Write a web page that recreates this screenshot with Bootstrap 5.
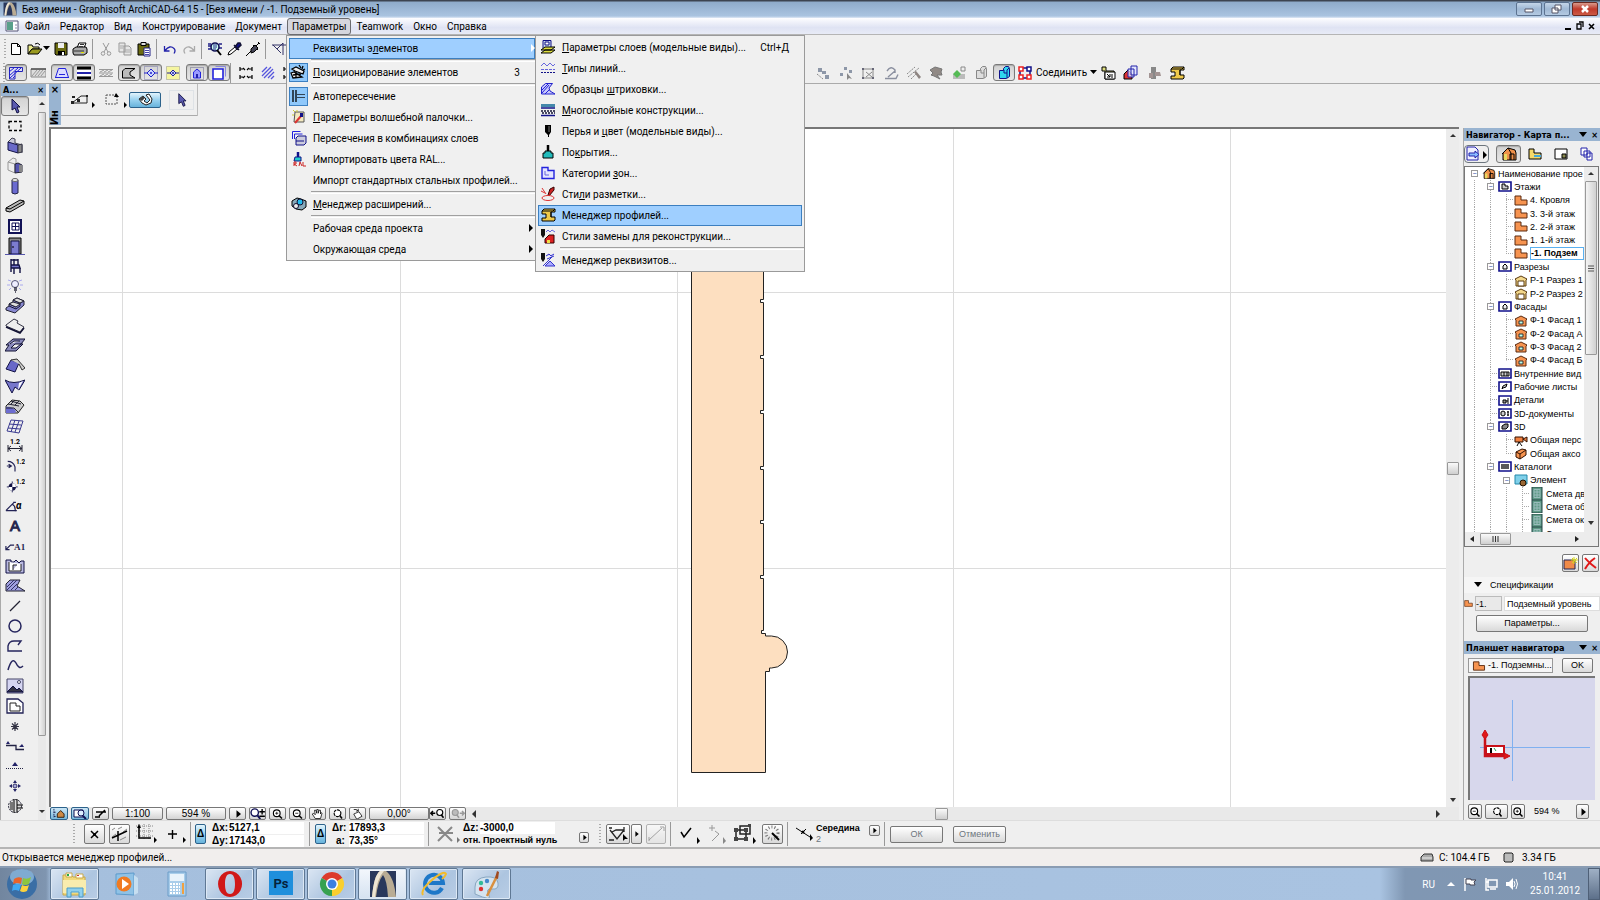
<!DOCTYPE html>
<html lang="ru">
<head>
<meta charset="utf-8">
<meta name="viewport" content="width=device-width, initial-scale=1">
<title>Graphisoft ArchiCAD-64 15</title>
<link rel="stylesheet" href="https://cdn.jsdelivr.net/npm/bootstrap@5.3.0/dist/css/bootstrap.min.css">
<style>
:root{--face:#efefef;--cap:#99b4d1;--ui:Roboto,"Open Sans",sans-serif;--small:"Liberation Sans",Arial,sans-serif}
body{font:10px/13px var(--ui);color:#000;background:var(--face);overflow:hidden}
button,input{font:inherit;color:inherit;padding:0;border:0;background:none;border-radius:0}
svg{display:block;flex:none}
.i16{width:16px;height:16px}.i20{width:20px;height:20px}.i28{width:28px;height:28px}
.titlebar{height:18px;background:linear-gradient(#3d4450 0,#3d4450 1px,#8fabca 2px,#a9c3e0 16px,#dfe8f5);padding-left:2px}
.winbtn{width:26px;height:14px;border:1px solid #5c7391;border-radius:2px;background:linear-gradient(#c4d5e8,#9fb8d4 50%,#b4cae2)}
.winbtn.close-w{background:linear-gradient(#d99a8c,#c0392b 50%,#cc5a45);border-color:#6b2a22}
.menubar{height:17px;background:linear-gradient(#fdfdff,#dfe3f3 60%,#e8ebf6);border-bottom:1px solid #b5b5b5;z-index:5;padding-left:4px}
.menubar .mb{height:17px;padding:0 4px;border:1px solid transparent;border-radius:3px;display:block;white-space:nowrap}
.menubar .mb.open{background:#d5d6dd;border-color:#6b6b6f}
.dropdown-menu.win{--bs-dropdown-min-width:0;margin:0;padding:2px 0 0;border:1px solid #9a9a9a;border-radius:0;background:#f0f0f0;font-size:10px;color:#000;top:17px;left:-1px;width:250px}
.dropdown-menu.win .dropdown-menu.win{top:-1px;left:248px;width:270px;padding:1px 0 0}
.mi{height:21px;width:100%;display:flex;align-items:center;padding:0 14px 0 1px;text-align:left;white-space:nowrap;border:1px solid transparent}
.mi .pic{width:23px;height:21px;display:flex;align-items:center;padding-left:2px;flex:none;margin-right:1px}
.mi.hot{background:#9fcfff;border-color:#3c7fc0;margin:0 2px;width:calc(100% - 4px);padding-left:0;padding-right:12px}
.mi.hot .pic{width:22px;padding-left:1px}
.main-m>li>.mi.hot{width:calc(100% - 2px);margin-right:0}
.mi .pic.on{background:#8fc8fb;border:1px solid #3c7fc0;width:19px;height:19px;padding:0;margin-right:5px}
.mi u{text-underline-offset:1px}
.msep{height:3px;margin-left:24px;border-top:1px solid #a0a0a0;border-bottom:1px solid #fff}
.arr{margin-left:auto;margin-right:-13px;border:4px solid transparent;border-left-color:#000;border-right:0}
.tbar{height:27px;padding-left:4px}
.tb{width:19px;height:20px;display:flex;align-items:center;justify-content:center;flex:none}
.tc{width:22px;height:17px;display:flex;align-items:center;justify-content:center;flex:none}
.pressed{border:1px solid #7a7a7a;border-radius:3px;background:linear-gradient(#d2d2d2,#e6e6e6);box-shadow:inset 0 1px 1px #aaa}
.grip{width:2px;height:20px;flex:none;background:repeating-linear-gradient(#aaa 0 1px,transparent 1px 3px)}
.vs{width:1px;height:20px;background:#999;margin:0 3px;flex:none}
.cap{background:var(--cap);height:12px;font:bold 9px/12px "DejaVu Sans Condensed","DejaVu Sans",sans-serif;padding:0 2px;white-space:nowrap;overflow:hidden;flex:none}
.toolbox{width:46px;border-left:1px solid #aaa}
.tool{height:20px;width:28px;display:flex;align-items:center;justify-content:center;flex:none}
.vbar{width:8px;background:#e9e9e9;flex:none}
.thumb{border:1px solid #999;border-radius:1px;background:linear-gradient(90deg,#f4f4f4,#d0d0d0)}
.thumb-h{border:1px solid #999;border-radius:1px;background:linear-gradient(#fafafa,#cfcfcf)}
.infobox{height:43px;padding-left:3px}
.infocap{width:12px;height:41px;background:var(--cap);font:bold 10px/12px "DejaVu Sans",sans-serif}
.infocap .vert{writing-mode:vertical-rl;transform:rotate(180deg)}
.infoin{width:136px;height:32px;border-bottom:1px solid #aaa}
.infoarea{border-right:1px solid #bbb;height:32px}
.blue{border:1px solid #2c628b;border-radius:2px;background:linear-gradient(#e3f4fc,#98d1ef 50%,#68b3db)}
.view{border-left:2px solid #777;border-top:2px solid #777;margin-left:3px;background:#fff}
.viewbar{height:13px;background:#e9e9e9;font:10px/12px var(--small);margin-left:4px;gap:3px}
.vb{height:13px;border:1px solid #777;border-radius:2px;background:linear-gradient(#fff,#d4d4d4);display:flex;align-items:center;justify-content:center;flex:none;overflow:hidden;width:17px;line-height:11px}
.vb.blue{background:linear-gradient(#cbe6f6,#78b8dc);border-color:#2c628b;width:18px}
.nav-pane{width:137px;flex:none;border-left:1px solid #aaa;font:9px/13px var(--small)}
.navtools{height:25px;padding-top:4px}
.nt{width:25px;height:18px;display:flex;align-items:center;justify-content:center}
.treebox{height:381px;border:1px solid #777;background:#fff;margin-right:1px}
.treelist{height:373px;flex:none}
.treewrap{height:365px;overflow:hidden}
.tr-row{flex:1 0 0;min-height:0;display:flex;align-items:center;white-space:nowrap;line-height:12px}
.tr-row svg{width:14px;height:13px;margin:0 2px 0 1px}
.g{width:16px;align-self:stretch;flex:none;background:repeating-linear-gradient(#aaa 0 1px,transparent 1px 2px) 9px 0/1px 100% no-repeat}
.g.n{background:none}
.g.t::after{content:"";display:block;height:50%;border-bottom:1px dotted #aaa;margin-left:9px}
.g.e{background-size:1px 50%}
.g.b{display:flex;align-items:center}
.g.b::before{content:"−";width:7px;height:7px;border:1px solid #999;background:#fff;margin-left:6px;font:7px/5px var(--small);color:#2040a0;text-align:center}
.cur{border:1px solid #5ab0f0;font-weight:bold;line-height:11px;flex:1}
.sb{width:14px;background:#ececec;flex:none;padding-bottom:2px}
.pbtn{border:1px solid #777;border-radius:2px;background:linear-gradient(#fff,#d9d9d9);display:flex;align-items:center;justify-content:center;flex:none}
.fld{background:#fff;border:1px solid #ddd;height:15px;min-width:0}
.sm{font:9px/13px var(--small)}
.preview{background:#d7d7ec;height:124px;border-left:2px solid #777;border-top:2px solid #777;margin:3px 5px 0 4px}
.coord{height:29px;border-top:1px solid #ddd;border-bottom:2px solid #b5b5b5;font:bold 10px/12px var(--small);padding-left:73px}
.cf{width:75px;height:12px;background:#fff;font-weight:bold}
.lb{width:17px;flex:none}
.cb{width:21px;height:20px}
.vs.tall{height:24px}
.statusb{height:17px;background:#f1eeed}
.taskbar{height:34px;background:linear-gradient(90deg,#72869f,#7f95b0 46px,#a5bfdd 52px,#a9c3e1 1380px,#8097b3 1405px,#8197b2);border-top:2px solid #8a9cb3;color:#fff}
.tk{width:49px;height:32px;margin-right:2px;display:flex;align-items:center;justify-content:center;flex:none}
.tk.run{border:1px solid #5f7894;border-radius:2px;background:linear-gradient(135deg,#dbe6f3,#adc5e0 60%,#b9cde5);box-shadow:inset 0 0 0 1px #dce8f5}
.tk.act{background:linear-gradient(#f3f7fc,#d5e2f1)}
</style>
</head>
<body class="d-flex flex-column vh-100">

<svg width="0" height="0" style="position:absolute" aria-hidden="true">
<defs>
<symbol id="doc" viewBox="0 0 16 16"><path d="M3.500 2.500h6l3 3v8h-9zM9.500 2.500v3h3" fill="#fff" stroke="#000"/></symbol>
<symbol id="open" viewBox="0 0 16 16"><path d="M1 13V4h4l1 2h6v2H5z" fill="#e9e98a" stroke="#000"/><path d="M1 13l4-5h10l-4 5z" fill="#9a9a20" stroke="#000"/><path d="M8 3q3-2 5 1" fill="none" stroke="#000"/></symbol>
<symbol id="save" viewBox="0 0 16 16"><path d="M2 2h12v12H3l-1-1z" fill="#6b6b10" stroke="#000"/><path d="M5 2h6v5H5z" fill="#eee"/><path d="M5 10h7v4H5z" fill="#000"/><path d="M9 11h2v3H9z" fill="#fff"/></symbol>
<symbol id="print" viewBox="0 0 16 16"><path d="M5 7l2-5h7l-2 5" fill="#fff" stroke="#000"/><path d="M1 8l3-2h10l1 2v4l-3 2H2l-1-2z" fill="#aaa" stroke="#000"/><path d="M2 10h10M8 3.500h4M7 5.500h4" stroke="#333"/><path d="M9 11h3v1H9z" fill="#e6e600"/></symbol>
<symbol id="cut" viewBox="0 0 16 16"><path d="M5 2l5 9M11 2L6 11" stroke="#999" fill="none"/><circle cx="5" cy="12.500" r="1.800" fill="none" stroke="#999"/><circle cx="11" cy="12.500" r="1.800" fill="none" stroke="#999"/></symbol>
<symbol id="copy" viewBox="0 0 16 16"><path d="M2 2h6v9H2zM7 5h5l2 2v7H7z" fill="#e6e6e6" stroke="#999"/><path d="M3 5h4M3 7h3M8 9h5M8 11h5" stroke="#aaa"/></symbol>
<symbol id="paste" viewBox="0 0 16 16"><path d="M2 3h11v11H2z" fill="#6b6b10" stroke="#000"/><path d="M5 1.500h5v3H5z" fill="#ddd" stroke="#000"/><path d="M8 7h6v8H8z" fill="#fff" stroke="#228"/><path d="M9 9.500h4M9 11.500h4M9 13.500h4" stroke="#44a"/></symbol>
<symbol id="undo" viewBox="0 0 16 16"><path d="M2.500 5v5h5M3 9.500q5-6 9-2q2 2 0 5" fill="none" stroke="#22a" stroke-width="1.300"/></symbol>
<symbol id="redo" viewBox="0 0 16 16"><path d="M13.500 5v5h-5M13 9.500q-5-6-9-2q-2 2 0 5" fill="none" stroke="#aaa" stroke-width="1.300"/></symbol>
<symbol id="find" viewBox="0 0 16 16"><path d="M1 3h3M1 5h3M1 8h3M12 3h3M12 7h3" stroke="#228" stroke-width="1.500"/><circle cx="8" cy="6" r="4" fill="#cfe" stroke="#115" stroke-width="1.600"/><path d="M6 4h4M6 6h4M6 8h3" stroke="#228"/><path d="M10 9l4 5" stroke="#000" stroke-width="2"/></symbol>
<symbol id="drop" viewBox="0 0 16 16"><path d="M2 14l1-3 6-5 2 2-6 5z" fill="#fff" stroke="#000"/><path d="M8 4l5 5M9 6l3-4 2 0 1 2-4 4z" stroke="#113" stroke-width="1.500" fill="#118"/></symbol>
<symbol id="syr" viewBox="0 0 16 16"><path d="M1 15l5-5M13 1l2 2M14 2l-3 3M8 4l5 5" stroke="#000" fill="none"/><path d="M6 8l4-4 3 3-4 4-3 1z" fill="#445" stroke="#000"/></symbol>
<symbol id="sieve" viewBox="0 0 16 16"><path d="M1 4h14M2 4l8 8M6 8l6-6v12" fill="none" stroke="#336"/></symbol>
<symbol id="hat" viewBox="0 0 16 16"><path d="M1.500 14V2.500h13v4H7V14z" fill="#dde" stroke="#22b"/><path d="M1 7l5-4M1 11l9-8M2 13l11-10M5 13l2-2" stroke="#22d"/></symbol>
<symbol id="slabg" viewBox="0 0 16 16"><path d="M1 4h15v8H1z" fill="#ddd" stroke="#888"/><path d="M1 4h15" stroke="#222"/><path d="M2 11l5-6M5 11l5-6M8 11l5-6M11 11l4-5" stroke="#999"/></symbol>
<symbol id="trap" viewBox="0 0 16 16"><path d="M4.500 3.500h7l3 9h-13z" fill="#dcdcff" stroke="#22d"/><path d="M1 12.500h14M5 9.500h6" stroke="#22d"/></symbol>
<symbol id="slabk" viewBox="0 0 16 16"><path d="M1 3h14M1 13h14" stroke="#000" stroke-width="3"/><path d="M1 7h14v2H1z" fill="#22a"/><path d="M1 5h14v2H1zM1 9h14v2H1z" fill="#fff"/></symbol>
<symbol id="slabl" viewBox="0 0 16 16"><path d="M1 4.500h14M1 11.500h14" stroke="#999"/><path d="M2 7l4-2M6 7l4-2M10 7l4-2M2 11l4-2M6 11l4-2M10 11l4-2M1 8h14" stroke="#999"/></symbol>
<symbol id="poly" viewBox="0 0 16 16"><path d="M4 3.500h10L9 7l0 3 5 3H1.500V6z" fill="#bbb" stroke="#000"/></symbol>
<symbol id="eye" viewBox="0 0 16 16"><path d="M1.500 1.500h13v13h-13z" fill="none" stroke="#77a" stroke-dasharray="1 1"/><path d="M8 4l4 4-4 4-4-4zM1 8h3M12 8h3" fill="#c9d4ff" stroke="#22c"/><circle cx="8" cy="8" r="1" fill="#22c"/></symbol>
<symbol id="eyey" viewBox="0 0 16 16"><path d="M1.500 1.500h13v13h-13z" fill="#f5f5a0" stroke="#998" stroke-dasharray="1 1"/><path d="M8 5l3 3-3 3-3-3zM2 8h3M11 8h3" fill="#c9d4ff" stroke="#229"/><circle cx="8" cy="8" r="1" fill="#229"/></symbol>
<symbol id="house" viewBox="0 0 16 16"><path d="M1.500 2.500h13v12h-13z" fill="none" stroke="#668" stroke-dasharray="1 1"/><path d="M4.500 13V7L8 4l3.500 3v6z" fill="#99f" stroke="#22d"/><path d="M7 9h2v4H7z" fill="#22a"/></symbol>
<symbol id="lay" viewBox="0 0 16 16"><path d="M4.500 1.500h10v10" fill="none" stroke="#88d"/><path d="M2 4h10v10H2z" fill="#fff" stroke="#22d" stroke-width="1.600"/></symbol>
<symbol id="stretch" viewBox="0 0 16 16"><path d="M2 2v4M14 2v4M2 10v4M14 10v4M2 4h3M11 4h3M2 12h3M11 12h3M5 3l2 2M11 3L9 5M5 13l2-2M11 13l-2-2" stroke="#000" stroke-width="1.200"/></symbol>
<symbol id="hb" viewBox="0 0 16 16"><path d="M2 7l5-5M2 11l9-9M4 13l9-9M8 13l6-6M11 14l3-3" stroke="#55d" stroke-width="1.300"/></symbol>
<symbol id="nd1" viewBox="0 0 16 16"><path d="M3 3h4v4H3zM7 6h4v3H7zM10 10h4v4h-4z" fill="#8d97a8"/><path d="M2 9l6 5" stroke="#888" stroke-dasharray="2 1"/></symbol>
<symbol id="nd2" viewBox="0 0 16 16"><path d="M6 2h3v3H6zM2 8h3v3H2zM11 5h3v3h-3z" fill="#8d97a8"/><path d="M9 8v7l2-2 3 1z" fill="#888"/></symbol>
<symbol id="nd3" viewBox="0 0 16 16"><path d="M3 4h10v9H3zM6 12l6-5M6 7l6 5" fill="none" stroke="#888"/><path d="M2 3h2v2H2zM12 3h2v2h-2zM2 12h2v2H2zM12 12h2v2h-2z" fill="#667"/></symbol>
<symbol id="nd4" viewBox="0 0 16 16"><path d="M2 13.500h11l2-4M4 6q4-6 8-1v3M5 12l7-6" fill="none" stroke="#8a8f9f" stroke-width="1.400"/></symbol>
<symbol id="nd5" viewBox="0 0 16 16"><path d="M1 9l8-7M2 12L13 3M5 14l5-5" stroke="#888" stroke-dasharray="2 1"/><path d="M8 7l2-1 5 6-2 2z" fill="#8e8582"/></symbol>
<symbol id="nd6" viewBox="0 0 16 16"><path d="M2 5l5-3 7 2-1 3 1 3-5 0 3 4-6-3-3-1 2-2z" fill="#918a86" stroke="#777"/></symbol>
<symbol id="nd7" viewBox="0 0 16 16"><path d="M2 9h12v5H2z" fill="#bbb"/><path d="M10 2h4v4h-4z" fill="none" stroke="#888"/><path d="M6 5l4 4-4 4-4-4z" fill="#5b5"/></symbol>
<symbol id="cube" viewBox="0 0 16 16"><path d="M3.500 5.500h4v-2l2-2h3l1 2v8l-3 2h-7z" fill="#ddd" stroke="#888"/><path d="M8 5v3h3M11 13V5l2-2" fill="none" stroke="#888"/></symbol>
<symbol id="cubec" viewBox="0 0 16 16"><path d="M3.500 5.500h4v-2l2-2h3l1 2v8l-3 2h-7z" fill="#2fd5ee" stroke="#118"/><path d="M8 5v3h3M11 13V5l2-2" fill="none" stroke="#118"/></symbol>
<symbol id="join" viewBox="0 0 16 16"><path d="M3 3h10v10H3z" fill="none" stroke="#118" stroke-width="1.500"/><path d="M2 2h4v4H2zM10 10h4v4h-4zM2 10h4v4H2z" fill="#fff" stroke="#e22" stroke-width="1.500"/><path d="M10 2h4v4h-4z" fill="#fff" stroke="#118" stroke-width="1.500"/></symbol>
<symbol id="prof" viewBox="0 0 16 16"><path d="M2 4l2-2h11v3h-4v5h4v3l-1 1H2v-3h4V7H2z" fill="#eec94a" stroke="#000"/><path d="M2 4h11l2-2M11 5v5" stroke="#000" fill="none"/></symbol>
<symbol id="obj1" viewBox="0 0 16 16"><path d="M2 2h4v4h8v8H5V6H2z" fill="#dfdf80" stroke="#000"/><path d="M5 7h10v7H5z" fill="#fff" stroke="#000"/><path d="M7 9l3 3M10 9v3H7M12 9v4" fill="none" stroke="#000"/></symbol>
<symbol id="obj2" viewBox="0 0 16 16"><path d="M1 14V9l4-4 4 4v5z" fill="#d33" stroke="#000"/><path d="M5 4h6v8H5zM8 1h6v9H8z" fill="#dfe2ff" fill-opacity=".8" stroke="#22a"/></symbol>
<symbol id="obj3" viewBox="0 0 16 16"><path d="M5 2h5v12H5z" fill="#888"/><path d="M3 8h4v5H3zM9 7h5l1 4H9z" fill="#a39493"/></symbol>
<symbol id="layers" viewBox="0 0 16 16"><path d="M3 1.500h8v8H3z" fill="#cde" stroke="#118"/><path d="M5 3h4v3H5z" fill="#fff" stroke="#118"/><path d="M1 11l4-3h10l-4 3zM1 14l4-3h10l-4 3z" fill="#dede40" stroke="#000"/></symbol>
<symbol id="lines" viewBox="0 0 16 16"><path d="M1 6l3-3 3 3 3-3 3 3 2-2" fill="none" stroke="#66d"/><path d="M1 9.500h14" stroke="#66d" stroke-dasharray="3 1"/><path d="M1 12.500h14" stroke="#118" stroke-dasharray="2 1"/></symbol>
<symbol id="fill" viewBox="0 0 16 16"><path d="M1.500 13V6l4-3.500h7L9 7l1 3 5 3z" fill="#c8c8fa" stroke="#22c"/><path d="M2 9l6-6M2 12l7-8M5 13l4-4" stroke="#22d"/></symbol>
<symbol id="comp" viewBox="0 0 16 16"><path d="M1 2h14v3H1z" fill="#48a"/><path d="M1 6h14M1 13.500h14" stroke="#118" stroke-width="1.500"/><path d="M1 9h14M2 11h13" stroke="#113" stroke-width="1.500" stroke-dasharray="2 1"/></symbol>
<symbol id="pen" viewBox="0 0 16 16"><path d="M5 2h6v7l-2 3v2H8v-2L5 9z" fill="#000"/><path d="M9 3v6" stroke="#777"/></symbol>
<symbol id="brush" viewBox="0 0 16 16"><path d="M8 1v7" stroke="#000" stroke-width="2.500"/><path d="M5 7h6v2h2v5H3V9h2z" fill="#2bb" stroke="#000"/></symbol>
<symbol id="zone" viewBox="0 0 16 16"><path d="M2 2.500h6v3h6v8H2z" fill="#e4e4ff" stroke="#22d" stroke-width="1.400"/><path d="M5 6v4h4" stroke="#66d" fill="none"/></symbol>
<symbol id="mark" viewBox="0 0 16 16"><path d="M8 9l2-6 4-2 0 3-5 6z" fill="#c22" stroke="#300"/><path d="M2 2l4 6M1 5l4 2" fill="none" stroke="#d33"/><ellipse cx="8" cy="12" rx="6" ry="2.500" fill="none" stroke="#d33"/></symbol>
<symbol id="reno" viewBox="0 0 16 16"><path d="M1 1h4v6l-2 3-2-3z" fill="#111"/><path d="M6 4l2-2 2 2 2-2 3 2" fill="none" stroke="#66d"/><path d="M5 15v-4l4-4 5 0v8z" fill="#d22" stroke="#300"/><path d="M7 12h3v3H7z" fill="#ed4"/></symbol>
<symbol id="attr" viewBox="0 0 16 16"><path d="M1 1h4v6l-2 3-2-3z" fill="#111"/><path d="M6 4l3-2 2 2 3-2M7 7l7-3M3 14l9-9M5 14h10l-5-5z" fill="#aaf" stroke="#33c"/></symbol>
<symbol id="posn" viewBox="0 0 16 16"><path d="M2 5l4-2 8 4-1 3-8-3zM1 9l3-1 8 5-9 1z" fill="#eee" stroke="#000" stroke-width="1.300"/><path d="M9 1l2 3M13 2l-1 3M15 5l-2 1M3 11l8-1M6 8v5" stroke="#000" stroke-width="1.300"/></symbol>
<symbol id="auto" viewBox="0 0 16 16"><path d="M3 2v12M6 2v12" stroke="#000" stroke-width="1.300"/><path d="M7 6.500h8M7 9.500h8" stroke="#345"/></symbol>
<symbol id="wand" viewBox="0 0 16 16"><path d="M4 3h9v10H3z" fill="#f3e9c0" stroke="#555"/><path d="M4 14l6-7" stroke="#d33" stroke-width="2"/><path d="M9 4h3v4H9z" fill="#118"/><path d="M2 1l2 2M1 6h2M6 1v2" stroke="#cc3"/></symbol>
<symbol id="inter" viewBox="0 0 16 16"><path d="M1.500 9V1.500h8M3.500 9V4h8" fill="none" stroke="#22d"/><path d="M5 8l2-2h8v7l-2 2H5z" fill="#ccd" stroke="#118"/><path d="M5 11h8" stroke="#118"/></symbol>
<symbol id="ral" viewBox="0 0 16 16"><path d="M7 1v5" stroke="#118" stroke-width="2.500"/><path d="M4 6h6v4H3z" fill="#2cc" stroke="#118"/><path d="M3 15v-4h2v2H3l3 2M8 15l1-4 2 4M12 11v4h3" stroke="#c22" fill="none"/></symbol>
<symbol id="ext" viewBox="0 0 16 16"><path d="M1 5l5-3 4 1 5 2v6l-4 3-6-1-4-3z" fill="#8ab" stroke="#000"/><circle cx="9" cy="6" r="3" fill="#2be" stroke="#113"/><circle cx="5" cy="10" r="2.500" fill="#eee" stroke="#113"/></symbol>
<symbol id="cursor" viewBox="0 0 20 20"><path d="M7 3v11l3-2 2 5 2-1-2-5h3z" fill="#5b5bb0" stroke="#114"/></symbol>
<symbol id="marq" viewBox="0 0 20 20"><path d="M4 5.500h12v9H4z" fill="none" stroke="#000" stroke-width="1.300" stroke-dasharray="3 2"/></symbol>
<symbol id="wall" viewBox="0 0 20 20"><path d="M3 6l4-4 3 1v4l7 2v8" fill="#c8c8d8" stroke="#445"/><path d="M3 6l10 3v8L3 14z" fill="#6a6ac8" stroke="#114"/><path d="M13 9l4-1v8l-4 1z" fill="#888" stroke="#334"/></symbol>
<symbol id="wall2" viewBox="0 0 20 20"><path d="M3 6l7 2v9l-7-3zM3 6l5-4 3 1v4" fill="#eee" stroke="#999"/><path d="M10 8l3-1 4 2v7l-7 1z" fill="#5555b0" stroke="#223"/><path d="M14 9l3 0v7l-3 0z" fill="#888"/></symbol>
<symbol id="colm" viewBox="0 0 20 20"><path d="M7 4v13q3 2 6 0V4z" fill="#6a6ad0" stroke="#224"/><ellipse cx="10" cy="4" rx="3" ry="1.500" fill="#eee" stroke="#666"/></symbol>
<symbol id="beam" viewBox="0 0 20 20"><path d="M1 12L15 4l4 1v3L5 16l-4-1z" fill="#bbb" stroke="#000"/><path d="M1 12l4 1L19 5" fill="none" stroke="#000"/></symbol>
<symbol id="wind" viewBox="0 0 20 20"><path d="M4 4h12v13H4z" fill="#fff" stroke="#115" stroke-width="2"/><path d="M7 7h7v7H7zM10.500 7v7M7 10.500h7" fill="none" stroke="#115"/></symbol>
<symbol id="door" viewBox="0 0 20 20"><path d="M4 2h12v16H4z" fill="#888" stroke="#000"/><path d="M6 5h8v13H6z" fill="#7c7cd0" stroke="#114"/><path d="M0 18.500h20" stroke="#55a"/><path d="M7 11h2" stroke="#000"/></symbol>
<symbol id="chair" viewBox="0 0 20 20"><path d="M6 3v13M9 3v6M13 3v6M6 4h7M6 9l8 0 1 3H6z" fill="#77c" stroke="#114" stroke-width="1.400"/><path d="M9 12v6M15 12v5" stroke="#114" stroke-width="1.400"/></symbol>
<symbol id="lamp" viewBox="0 0 20 20"><circle cx="10" cy="8" r="3.500" fill="#eef" stroke="#557"/><path d="M9 12h3M9 14h3M10 16h1" stroke="#334" stroke-width="1.500"/><path d="M3 4l3 1M2 9h3M17 4l-3 1M15 9h3M4 14l2-2M16 14l-2-2" stroke="#aae"/></symbol>
<symbol id="stair" viewBox="0 0 20 20"><path d="M1 12l3-2V8l4-2V4l4-2 7 3v4L10 17 1 14z" fill="#8888d0" stroke="#223"/><path d="M4 8l7 3M8 4l7 3M4 10l7 3 4-3V7l4-2" fill="none" stroke="#113"/><path d="M4 8l4-2 7 2-4 3zM8 4l4-2 7 3-4 2z" fill="#ddd" stroke="#223"/></symbol>
<symbol id="slab" viewBox="0 0 20 20"><path d="M1 9l8-6 4 2-1 2 7 4-4 5-14-6z" fill="#eee" stroke="#334"/><path d="M1 11l14 6 4-5" fill="none" stroke="#113" stroke-width="1.500"/></symbol>
<symbol id="mesh" viewBox="0 0 20 20"><path d="M0 15l4-6H1l7-6h12l-4 5h2l-7 7z" fill="#88b" stroke="#113"/><path d="M6 12l4-4h6l-5 4zM5 8l4-3h6" fill="#eee" stroke="#113"/></symbol>
<symbol id="roof" viewBox="0 0 20 20"><path d="M6 4l8 3-4 9-9-3z" fill="#6868c8" stroke="#114"/><path d="M6 4l6-1 8 9-3 2-3-6" fill="#ccc" stroke="#333"/></symbol>
<symbol id="shell" viewBox="0 0 20 20"><path d="M0 4q8 5 20 0l-6 10-4-3-3 6z" fill="#7777cc" stroke="#114"/><path d="M14 7l4-2-5 9z" fill="#fff"/></symbol>
<symbol id="terr" viewBox="0 0 20 20"><path d="M1 10l6-6 8 1 4 4-6 8H1z" fill="#ccc" stroke="#222"/><path d="M1 11q6-1 10 4l-1 2H1z" fill="#6c6cd0"/><path d="M3 8l11 2M6 5l10 3M6 8l4-4M10 9l4-4M1 12h8l4 4" stroke="#223" fill="none"/></symbol>
<symbol id="curt" viewBox="0 0 20 20"><path d="M6 4l12 1-4 12-12-2zM4 8l12 1M3 12l12 1M10 4L6 16M14 5l-4 11" fill="none" stroke="#3a3a90"/></symbol>
<symbol id="dim" viewBox="0 0 20 20"><path d="M3 9v7M17 9v7M3 12.500h14M6 10l-3 2.500 3 2.500M14 10l3 2.500-3 2.500" stroke="#223" fill="none"/><text x="5" y="8" font-size="7" font-weight="bold">1.2</text></symbol>
<symbol id="rad" viewBox="0 0 22 20"><path d="M3 5q6 0 8 6l0 5M2 10h5M4 8l3 2-3 2" stroke="#225" fill="none" stroke-width="1.300"/><text x="12" y="8" font-size="7" font-weight="bold">1.2</text></symbol>
<symbol id="lev" viewBox="0 0 22 20"><path d="M2 11h12M8 5v12" stroke="#225"/><circle cx="8" cy="11" r="4" fill="#114"/><path d="M8 7v4h4q0-4-4-4M8 15v-4H4q0 4 4 4" fill="#fff"/><text x="12" y="8" font-size="7" font-weight="bold">1.2</text></symbol>
<symbol id="ang" viewBox="0 0 22 20"><path d="M1 15h12M1 15L10 6M8 8q4 2 3 8M9 6h3" stroke="#225" fill="none" stroke-width="1.300"/><text x="12" y="13" font-size="11" font-style="italic" font-weight="bold">α</text></symbol>
<symbol id="txt" viewBox="0 0 20 20"><text x="10" y="15" text-anchor="middle" font-family="Liberation Sans" font-size="15" fill="#26264e" stroke="#26264e">A</text></symbol>
<symbol id="a1" viewBox="0 0 22 20"><path d="M1 14l5-5h4M1 10v4h4" stroke="#225" fill="none" stroke-width="1.300"/><text x="10" y="14" font-family="Liberation Serif" font-size="10" font-weight="bold" fill="#26264e">A1</text></symbol>
<symbol id="zon" viewBox="0 0 20 20"><path d="M1 4h5v2h3l2-2 3 3 2-2h3v12H1z" fill="#b9b9e0" stroke="#114"/><path d="M4 6v9h12V8M8 14V9h4" fill="#fff" stroke="#222"/></symbol>
<symbol id="fil" viewBox="0 0 20 20"><path d="M1 15V8l4-4h10l-3 6 8 5z" fill="#a0a0e0" stroke="#223"/><path d="M2 11l7-7M2 14L12 4M6 14l6-6M10 14l3-3" stroke="#336"/></symbol>
<symbol id="lin" viewBox="0 0 20 20"><path d="M5 15L15 5" stroke="#223" stroke-width="1.300"/></symbol>
<symbol id="circ" viewBox="0 0 20 20"><circle cx="10" cy="10" r="6" fill="none" stroke="#26265e" stroke-width="1.500"/></symbol>
<symbol id="pl" viewBox="0 0 20 20"><path d="M13 9l3-4h-7q-5 0-6 5v5h14" fill="none" stroke="#26265e" stroke-width="1.400"/></symbol>
<symbol id="spl" viewBox="0 0 20 20"><path d="M3 14q4-14 8-7q3 7 7 3" fill="none" stroke="#26265e" stroke-width="1.500"/></symbol>
<symbol id="img" viewBox="0 0 20 20"><path d="M2 3h16v14H2z" fill="#d5d5f2" stroke="#446"/><path d="M2 16l6-6 4 4 2-2 4 4z" fill="#334" stroke="#114"/><circle cx="14" cy="6" r="1.500" fill="#fff" stroke="#446"/></symbol>
<symbol id="drw" viewBox="0 0 20 20"><path d="M2 3h11l5 4v10H2z" fill="#fff" stroke="#225" stroke-width="1.300"/><path d="M5 7h6v3h4v5H5z" fill="none" stroke="#222"/></symbol>
<symbol id="star" viewBox="0 0 20 20"><path d="M10 6v9M6 10.500h8M7 7.500l6 6M13 7.500l-6 6" stroke="#334" stroke-width="1.200"/></symbol>
<symbol id="sec" viewBox="0 0 20 20"><path d="M1 9.500h10v4h8" fill="none" stroke="#224" stroke-width="1.300"/><path d="M1 8l2-3 2 3zM14 11l3-3 2 3z" fill="#226"/></symbol>
<symbol id="elv" viewBox="0 0 20 20"><path d="M1 12.500h18" stroke="#224" stroke-dasharray="1 1"/><path d="M7 10l3-4 3 4z" fill="#226"/></symbol>
<symbol id="intr" viewBox="0 0 20 20"><path d="M10 4l2 3H8zM10 16l2-3H8zM4 10l3-2v4zM16 10l-3-2v4z" fill="#226"/><circle cx="10" cy="10" r="2" fill="#aad" stroke="#336"/></symbol>
<symbol id="det" viewBox="0 0 20 20"><circle cx="10" cy="10" r="6.500" fill="#ddd" stroke="#334" stroke-dasharray="2 1"/><path d="M9 3v14M12 3v14M12 9h6M12 12h6" stroke="#000"/><path d="M5 6h3v8H5z" fill="#777"/></symbol>
<symbol id="arc" viewBox="0 0 28 28"><path d="M1 1h26v26H1z" fill="#29385c"/><path d="M3 27Q5 5 11 1h6q8 6 10 26h-8Q18 10 14 5q-5 6-7 22z" fill="#b9ac94"/><path d="M3 27Q5 5 11 1h4Q8 8 6 27z" fill="#eee6d4"/></symbol>
<symbol id="zin" viewBox="0 0 16 16"><circle cx="7" cy="7" r="4.500" fill="#fff" stroke="#000" stroke-width="1.500"/><path d="M10 10l4 4" stroke="#000" stroke-width="2"/><path d="M5 7h4M7 5v4" stroke="#000"/></symbol>
<symbol id="zout" viewBox="0 0 16 16"><circle cx="7" cy="7" r="4.500" fill="#fff" stroke="#000" stroke-width="1.500"/><path d="M10 10l4 4" stroke="#000" stroke-width="2"/><path d="M5 7h4" stroke="#000"/></symbol>
<symbol id="zfit" viewBox="0 0 16 16"><circle cx="8" cy="7" r="4.500" fill="#fff" stroke="#000" stroke-width="1.500" stroke-dasharray="4 1"/><path d="M11 10l3 4" stroke="#000" stroke-width="2"/></symbol>
<symbol id="hand" viewBox="0 0 16 16"><path d="M5 14l-4-6 2-1 2 2-1-6h2l1 4 0-5h2v5l1-4h2l0 5 1-2 1 1-2 7z" fill="#fff" stroke="#000"/></symbol>
<symbol id="rot" viewBox="0 0 16 16"><path d="M3 8l7-3 4 6-7 4z" fill="#fff" stroke="#000"/><path d="M3 2q4-1 6 2M9 1v3H6" fill="none" stroke="#000"/></symbol>
<symbol id="zb" viewBox="0 0 18 16"><path d="M0 7h6M3 4L0 7l3 3" stroke="#000" stroke-width="2" fill="none"/><circle cx="12" cy="6" r="4" fill="#fff" stroke="#000" stroke-width="1.500"/><path d="M14 9l3 4" stroke="#000" stroke-width="2"/></symbol>
<symbol id="zf" viewBox="0 0 18 16"><path d="M18 7h-6M15 4l3 3-3 3" stroke="#999" stroke-width="2" fill="none"/><circle cx="6" cy="6" r="4" fill="#bbb" stroke="#999" stroke-width="1.500"/><path d="M8 9l3 4" stroke="#999" stroke-width="2"/></symbol>
<symbol id="tri" viewBox="0 0 16 16"><path d="M6 3l6 5-6 5z"/></symbol>
<symbol id="nhouse" viewBox="0 0 16 16"><path d="M2 14V7l5-5 7 2 1 3v7z" fill="#f0914a" stroke="#000"/><path d="M1 8l6-6 3 5v7M9 14V8h4v6" fill="none" stroke="#000"/><path d="M3 8h3v6H3z" fill="#e8d860"/></symbol>
<symbol id="floor" viewBox="0 0 14 13"><path d="M1 2h6v4h6v5H1z" fill="#f79450" stroke="#5a2a10"/></symbol>
<symbol id="fold" viewBox="0 0 14 13"><path d="M1 2h12v9H1z" fill="#fff" stroke="#10108a" stroke-width="1.600"/><path d="M4 9V4h3v2h3v3z" fill="#ccc" stroke="#000"/></symbol>
<symbol id="foldh" viewBox="0 0 14 13"><path d="M1 2h12v9H1z" fill="#fff" stroke="#10108a" stroke-width="1.600"/><path d="M5 9V6l2-2 2 2v3z" fill="#eee" stroke="#000"/></symbol>
<symbol id="foldi" viewBox="0 0 14 13"><path d="M1 2h12v9H1z" fill="#fff" stroke="#10108a" stroke-width="1.600"/><path d="M3 5h8v4H3zM6 5v4M9 5v4" fill="#ccc" stroke="#000"/></symbol>
<symbol id="folds" viewBox="0 0 14 13"><path d="M1 2h12v9H1z" fill="#fff" stroke="#10108a" stroke-width="1.600"/><path d="M4 9l1-3 4-2-1 3-3 1z" fill="#ccc" stroke="#000"/></symbol>
<symbol id="foldx" viewBox="0 0 14 13"><path d="M1 2h12v9H1z" fill="#fff" stroke="#10108a" stroke-width="1.600"/><path d="M5 6h3v3H5zM10 4v6M8 7h2" fill="#999" stroke="#000"/></symbol>
<symbol id="foldd" viewBox="0 0 14 13"><path d="M1 2h12v9H1z" fill="#fff" stroke="#10108a" stroke-width="1.600"/><path d="M3 5l2-1 2 1v3L5 9 3 8zM10 4v5M9 5h2M9 8h2" fill="#ccc" stroke="#000"/></symbol>
<symbol id="foldb" viewBox="0 0 14 13"><path d="M1 2h12v9H1z" fill="#fff" stroke="#10108a" stroke-width="1.600"/><path d="M4 6l3-2h3v3L8 9H4z" fill="#888" stroke="#000"/></symbol>
<symbol id="foldc" viewBox="0 0 14 13"><path d="M1 2h12v9H1z" fill="#fff" stroke="#10108a" stroke-width="1.600"/><path d="M4 4v5M6 4v5M8 4v5M10 4v5" stroke="#000" stroke-width="1.300"/></symbol>
<symbol id="sech" viewBox="0 0 14 13"><path d="M1 5l6-3 6 3-1 1v6H2V6z" fill="#f3d78a" stroke="#5a3a10"/><path d="M4 7h6v5H4z" fill="#fff" stroke="#5a3a10"/></symbol>
<symbol id="fac" viewBox="0 0 14 13"><path d="M1 5l6-3 6 3-1 1v6H2V6z" fill="#f79450" stroke="#5a2a10"/><path d="M5 7h4v3H5z" fill="#bfe" stroke="#333"/></symbol>
<symbol id="cam" viewBox="0 0 14 13"><path d="M1 3h8v5H1zM9 5l4-2v5z" fill="#f08040" stroke="#301000"/><path d="M5 8l-2 4M5 8l3 4" stroke="#000"/></symbol>
<symbol id="axo" viewBox="0 0 14 13"><path d="M2 5l6-3 4 1v5l-6 4-4-2z" fill="#f79450" stroke="#301000"/><path d="M2 5l4 2 6-4M6 7v5" fill="none" stroke="#301000"/></symbol>
<symbol id="elem" viewBox="0 0 14 13"><path d="M1 1h12v9H1z" fill="#7fd0ea" stroke="#28a"/><circle cx="9" cy="9" r="3" fill="#963" stroke="#210"/></symbol>
<symbol id="cat" viewBox="0 0 14 13"><path d="M2 0h10v13H2z" fill="#5f9a86" stroke="#244"/><path d="M4 2.500h6v8H4zM7 2v9M4 5h6M4 8h6" fill="none" stroke="#9bb"/></symbol>
</defs>
</svg>

<header class="titlebar d-flex align-items-center flex-shrink-0">
  <svg class="i16" style="height:14px"><use href="#arc"/></svg>
  <span class="ms-1 flex-grow-1 text-nowrap">Без имени - Graphisoft ArchiCAD-64 15 - [Без имени / -1. Подземный уровень]</span>
  <div class="d-flex align-items-center" style="gap:2px;padding-right:2px">
    <button class="winbtn" aria-label="Свернуть"><svg width="24" height="12"><path d="M8 6h8v3H8z" fill="#fff" stroke="#556"/></svg></button>
    <button class="winbtn" aria-label="Восстановить"><svg width="24" height="12"><path d="M10 2h6v5h-6zM7 5h6v5H7z" fill="#fff" stroke="#556"/></svg></button>
    <button class="winbtn close-w" aria-label="Закрыть"><svg width="24" height="12"><path d="M9 3l6 6M15 3L9 9" stroke="#fff" stroke-width="2.500"/></svg></button>
  </div>
</header>

<nav class="menubar d-flex align-items-center position-relative flex-shrink-0">
  <svg width="16" height="12"><path d="M2 1h12v10H2z" fill="#fff" stroke="#557"/><path d="M3 2h6v8H3z" fill="#5aa08a"/><path d="M11 5h2M11 8h2" stroke="#88a"/></svg>
  <ul class="list-unstyled d-flex m-0">
    <li><button class="mb">Файл</button></li>
    <li><button class="mb">Редактор</button></li>
    <li><button class="mb">Вид</button></li>
    <li><button class="mb">Конструирование</button></li>
    <li><button class="mb">Документ</button></li>
    <li class="position-relative"><button class="mb open">Параметры</button>
      <ul class="dropdown-menu show win main-m">
        <li><button class="mi hot"><span class="pic"></span><span>Реквизиты э<u>л</u>ементов</span><i class="arr" style="border-left-color:#fff"></i></button>
          <ul class="dropdown-menu show win">
            <li><button class="mi"><span class="pic"><svg class="i16"><use href="#layers"/></svg></span><span><u>П</u>араметры слоев (модельные виды)...</span><span class="ms-auto">Ctrl+Д</span></button></li>
            <li><button class="mi"><span class="pic"><svg class="i16"><use href="#lines"/></svg></span><span><u>Т</u>ипы линий...</span></button></li>
            <li><button class="mi"><span class="pic"><svg class="i16"><use href="#fill"/></svg></span><span>Образцы <u>ш</u>триховки...</span></button></li>
            <li><button class="mi"><span class="pic"><svg class="i16"><use href="#comp"/></svg></span><span><u>М</u>ногослойные конструкции...</span></button></li>
            <li><button class="mi"><span class="pic"><svg class="i16"><use href="#pen"/></svg></span><span>Перья и <u>ц</u>вет (модельные виды)...</span></button></li>
            <li><button class="mi"><span class="pic"><svg class="i16"><use href="#brush"/></svg></span><span>По<u>к</u>рытия...</span></button></li>
            <li><button class="mi"><span class="pic"><svg class="i16"><use href="#zone"/></svg></span><span>Категории <u>з</u>он...</span></button></li>
            <li><button class="mi"><span class="pic"><svg class="i16"><use href="#mark"/></svg></span><span>Сти<u>л</u>и разметки...</span></button></li>
            <li><button class="mi hot"><span class="pic"><svg class="i16"><use href="#prof"/></svg></span><span>Менеджер профилей...</span></button></li>
            <li><button class="mi"><span class="pic"><svg class="i16"><use href="#reno"/></svg></span><span>Стили замены для реконструкции...</span></button></li>
            <li class="msep"></li>
            <li><button class="mi"><span class="pic"><svg class="i16"><use href="#attr"/></svg></span><span>Менеджер реквизитов...</span></button></li>
          </ul></li>
        <li class="msep"></li>
        <li><button class="mi"><span class="pic on"><svg class="i16"><use href="#posn"/></svg></span><span><u>П</u>озиционирование элементов</span><span class="ms-auto">3</span></button></li>
        <li class="msep"></li>
        <li><button class="mi"><span class="pic on"><svg class="i16"><use href="#auto"/></svg></span><span>Автопересечение</span></button></li>
        <li><button class="mi"><span class="pic"><svg class="i16"><use href="#wand"/></svg></span><span><u>П</u>араметры волшебной палочки...</span></button></li>
        <li><button class="mi"><span class="pic"><svg class="i16"><use href="#inter"/></svg></span><span>Пересечения в комбинациях слоев</span></button></li>
        <li><button class="mi"><span class="pic"><svg class="i16"><use href="#ral"/></svg></span><span>Импортировать цвета RAL...</span></button></li>
        <li><button class="mi"><span class="pic"></span><span>Импорт стандартных стальных профилей...</span></button></li>
        <li class="msep"></li>
        <li><button class="mi"><span class="pic"><svg class="i16"><use href="#ext"/></svg></span><span><u>М</u>енеджер расширений...</span></button></li>
        <li class="msep"></li>
        <li><button class="mi"><span class="pic"></span><span>Рабочая среда проекта</span><i class="arr"></i></button></li>
        <li><button class="mi"><span class="pic"></span><span>Окружающая среда</span><i class="arr"></i></button></li>
      </ul></li>
    <li><button class="mb">Teamwork</button></li>
    <li><button class="mb">Окно</button></li>
    <li><button class="mb">Справка</button></li>
  </ul>
  <svg class="ms-auto me-1" width="32" height="12"><path d="M1 9h6" stroke="#000" stroke-width="2"/><path d="M15 2h4v5M13 4h4v5h-4z" fill="none" stroke="#000" stroke-width="1.300"/><path d="M25 4l5 5M30 4l-5 5" stroke="#000" stroke-width="1.600"/></svg>
</nav>

<div class="tbar d-flex align-items-center flex-shrink-0">
  <span class="grip"></span>
  <button class="tb" aria-label="Новый"><svg class="i16"><use href="#doc"/></svg></button>
  <button class="tb" style="width:26px" aria-label="Открыть"><svg class="i16"><use href="#open"/></svg><svg width="7" height="5"><path d="M0 0h7L3.500 4z"/></svg></button>
  <button class="tb" aria-label="Сохранить"><svg class="i16"><use href="#save"/></svg></button>
  <button class="tb" aria-label="Печать"><svg class="i16"><use href="#print"/></svg></button>
  <span class="vs"></span>
  <button class="tb" aria-label="Вырезать"><svg class="i16"><use href="#cut"/></svg></button>
  <button class="tb" aria-label="Копировать"><svg class="i16"><use href="#copy"/></svg></button>
  <button class="tb" aria-label="Вставить"><svg class="i16"><use href="#paste"/></svg></button>
  <span class="vs"></span>
  <button class="tb" aria-label="Отменить действие"><svg class="i16"><use href="#undo"/></svg></button>
  <button class="tb" aria-label="Повторить"><svg class="i16"><use href="#redo"/></svg></button>
  <span class="vs"></span>
  <button class="tb" aria-label="Найти"><svg class="i16"><use href="#find"/></svg></button>
  <button class="tb" aria-label="Пипетка"><svg class="i16"><use href="#drop"/></svg></button>
  <button class="tb" aria-label="Шприц"><svg class="i16"><use href="#syr"/></svg></button>
  <span class="vs"></span>
  <button class="tb" aria-label="Сетка"><svg class="i16"><use href="#sieve"/></svg></button>
</div>

<div class="d-flex align-items-center flex-shrink-0 border-bottom" style="height:22px;border-color:#aaa!important">
  <div class="d-flex align-items-center flex-shrink-0" style="width:812px;padding-left:3px">
    <span class="grip"></span>
    <button class="tc pressed" aria-label="Штриховка стены"><svg class="i16"><use href="#hat"/></svg></button>
    <button class="tc" aria-label="Перекрытие"><svg class="i16"><use href="#slabg"/></svg></button>
    <span style="width:2px"></span>
    <button class="tc pressed" aria-label="Крыша"><svg class="i16"><use href="#trap"/></svg></button>
    <button class="tc pressed" aria-label="Слои"><svg class="i16"><use href="#slabk"/></svg></button>
    <button class="tc" aria-label="Слои контур"><svg class="i16"><use href="#slabl"/></svg></button>
    <span style="width:1px"></span>
    <button class="tc pressed" aria-label="Полигон"><svg class="i16"><use href="#poly"/></svg></button>
    <button class="tc pressed" aria-label="Показать"><svg class="i16"><use href="#eye"/></svg></button>
    <button class="tc" aria-label="Подсветить"><svg class="i16"><use href="#eyey"/></svg></button>
    <span style="width:2px"></span>
    <button class="tc pressed" aria-label="Здание"><svg class="i16"><use href="#house"/></svg></button>
    <button class="tc pressed" aria-label="Слой"><svg class="i16"><use href="#lay"/></svg></button>
    <span class="vs" style="margin:0 4px 0 0"></span>
    <button class="tc" aria-label="Растянуть"><svg class="i16"><use href="#stretch"/></svg></button>
    <button class="tc" aria-label="Штриховка"><svg class="i16"><use href="#hb"/></svg></button>
    <button class="tc" aria-label="Размер"><svg class="i16"><use href="#stretch"/></svg></button>
  </div>
  <div class="d-flex justify-content-between" style="width:203px">
    <button class="tc" aria-label="Узлы"><svg class="i16"><use href="#nd1"/></svg></button>
    <button class="tc" aria-label="Выбор узлов"><svg class="i16"><use href="#nd2"/></svg></button>
    <button class="tc" aria-label="Рамка"><svg class="i16"><use href="#nd3"/></svg></button>
    <button class="tc" aria-label="Дуга"><svg class="i16"><use href="#nd4"/></svg></button>
    <button class="tc" aria-label="Разделить"><svg class="i16"><use href="#nd5"/></svg></button>
    <button class="tc" aria-label="Форма"><svg class="i16"><use href="#nd6"/></svg></button>
    <button class="tc" aria-label="Гравитация"><svg class="i16"><use href="#nd7"/></svg></button>
    <button class="tc" aria-label="Куб"><svg class="i16"><use href="#cube"/></svg></button>
    <button class="tc pressed" aria-label="Группа"><svg class="i16"><use href="#cubec"/></svg></button>
  </div>
  <button class="d-flex align-items-center" style="padding:0 0 0 2px;gap:3px"><svg class="i16"><use href="#join"/></svg>Соединить<svg width="7" height="5"><path d="M0 0h7L3.500 4z"/></svg></button>
  <div class="d-flex" style="gap:1px">
    <button class="tc" aria-label="Объект"><svg class="i16"><use href="#obj1"/></svg></button>
    <button class="tc" aria-label="Модель"><svg class="i16"><use href="#obj2"/></svg></button>
    <button class="tc" aria-label="Морф"><svg class="i16"><use href="#obj3"/></svg></button>
    <button class="tc" aria-label="Профиль"><svg class="i16"><use href="#prof"/></svg></button>
  </div>
</div>

<main class="d-flex flex-grow-1" style="min-height:0">
  <aside class="toolbox d-flex flex-column flex-shrink-0">
    <div class="cap d-flex justify-content-between"><span>А...</span><span>×</span></div>
    <div class="d-flex flex-grow-1 overflow-hidden justify-content-between">
      <div class="d-flex flex-column">
        <button class="tool pressed" aria-label="Указатель"><svg class="i20"><use href="#cursor"/></svg></button>
        <button class="tool" aria-label="Бегущая рамка"><svg class="i20"><use href="#marq"/></svg></button>
        <button class="tool" aria-label="Стена"><svg class="i20"><use href="#wall"/></svg></button>
        <button class="tool" aria-label="Торец стены"><svg class="i20"><use href="#wall2"/></svg></button>
        <button class="tool" aria-label="Колонна"><svg class="i20"><use href="#colm"/></svg></button>
        <button class="tool" aria-label="Балка"><svg class="i20"><use href="#beam"/></svg></button>
        <button class="tool" aria-label="Окно"><svg class="i20"><use href="#wind"/></svg></button>
        <button class="tool" aria-label="Дверь"><svg class="i20"><use href="#door"/></svg></button>
        <button class="tool" aria-label="Мебель"><svg class="i20"><use href="#chair"/></svg></button>
        <button class="tool" aria-label="Свет"><svg class="i20"><use href="#lamp"/></svg></button>
        <button class="tool" aria-label="Лестница"><svg class="i20"><use href="#stair"/></svg></button>
        <button class="tool" aria-label="Плита"><svg class="i20"><use href="#slab"/></svg></button>
        <button class="tool" aria-label="Ступени"><svg class="i20"><use href="#mesh"/></svg></button>
        <button class="tool" aria-label="Скат"><svg class="i20"><use href="#roof"/></svg></button>
        <button class="tool" aria-label="Оболочка"><svg class="i20"><use href="#shell"/></svg></button>
        <button class="tool" aria-label="3D-сетка"><svg class="i20"><use href="#terr"/></svg></button>
        <button class="tool" aria-label="Навесная стена"><svg class="i20"><use href="#curt"/></svg></button>
        <button class="tool" aria-label="Линейный размер"><svg class="i20"><use href="#dim"/></svg></button>
        <button class="tool" aria-label="Радиальный размер"><svg class="i20"><use href="#rad"/></svg></button>
        <button class="tool" aria-label="Отметка уровня"><svg class="i20"><use href="#lev"/></svg></button>
        <button class="tool" aria-label="Угловой размер"><svg class="i20"><use href="#ang"/></svg></button>
        <button class="tool" aria-label="Текст"><svg class="i20"><use href="#txt"/></svg></button>
        <button class="tool" aria-label="Выносная надпись"><svg class="i20"><use href="#a1"/></svg></button>
        <button class="tool" aria-label="Зона"><svg class="i20"><use href="#zon"/></svg></button>
        <button class="tool" aria-label="Штриховка"><svg class="i20"><use href="#fil"/></svg></button>
        <button class="tool" aria-label="Линия"><svg class="i20"><use href="#lin"/></svg></button>
        <button class="tool" aria-label="Окружность"><svg class="i20"><use href="#circ"/></svg></button>
        <button class="tool" aria-label="Полилиния"><svg class="i20"><use href="#pl"/></svg></button>
        <button class="tool" aria-label="Сплайн"><svg class="i20"><use href="#spl"/></svg></button>
        <button class="tool" aria-label="Рисунок"><svg class="i20"><use href="#img"/></svg></button>
        <button class="tool" aria-label="Чертеж"><svg class="i20"><use href="#drw"/></svg></button>
        <button class="tool" aria-label="Узловая точка"><svg class="i20"><use href="#star"/></svg></button>
        <button class="tool" aria-label="Разрез"><svg class="i20"><use href="#sec"/></svg></button>
        <button class="tool" aria-label="Фасад"><svg class="i20"><use href="#elv"/></svg></button>
        <button class="tool" aria-label="Развертка"><svg class="i20"><use href="#intr"/></svg></button>
        <button class="tool" aria-label="Деталь"><svg class="i20"><use href="#det"/></svg></button>
      </div>
      <div class="vbar d-flex flex-column align-items-center">
        <svg width="8" height="16"><path d="M1 9l3-3 3 3z" fill="#333"/></svg>
        <div class="thumb w-100" style="height:624px"></div>
        <svg width="8" height="14" class="mt-auto"><path d="M1 4l3 3 3-3z" fill="#333"/></svg>
      </div>
    </div>
  </aside>

  <div class="d-flex flex-column flex-grow-1" style="min-width:0">
    <div class="infobox d-flex flex-shrink-0">
      <div class="infocap d-flex flex-column align-items-center justify-content-between"><span>×</span><span class="vert">Ин</span></div>
      <div class="infoarea d-flex">
        <div class="infoin d-flex align-items-center">
          <svg width="22" height="18" class="ms-2"><path d="M3 12l9-7h6v7h-8z" fill="none" stroke="#222"/><path d="M2 10h3v3H2zM8 8h3v3H8zM3 5h3v2H3zM17 4h2v2h-2z" fill="#222"/></svg>
          <svg width="8" height="16" class="mt-2"><path d="M1 6l3 3-3 3z"/></svg>
          <svg width="20" height="18" style="margin-left:4px"><path d="M3 4h11v9H3z" fill="none" stroke="#555" stroke-dasharray="2 1"/><path d="M13 2l3 4h-5z"/></svg>
          <svg width="6" height="16" class="mt-2"><path d="M1 6l3 3-3 3z"/></svg>
          <button class="blue d-flex align-items-center justify-content-center" style="width:32px;height:16px" aria-label="Магнит"><svg width="15" height="13"><path d="M1 6l4-3 3 3-2 2 3 2 3-3-4-5 3-1 3 5-1 4-5 2-4-2z" fill="#fff" stroke="#222"/><path d="M1 6l4-3 2 2-3 3z" fill="#444"/></svg></button>
          <button class="border ms-2" style="width:25px;height:20px" aria-label="Стрелка"><svg width="23" height="18" viewBox="0 0 20 20"><use href="#cursor"/></svg></button>
        </div>
      </div>
    </div>
    <div class="view flex-grow-1 d-flex" style="min-height:0">
      <svg class="h-100" style="width:0;flex:1 1 0">
        <path d="M71.500 0v800M349.500 0v800M626.500 0v800M902.500 0v800M1179.500 0v800M0 163.500h1600M0 439.500h1600" stroke="#dcdcdc"/>
        <path d="M640.500 60V643.500h74V542.500h4V539h2a16 16 0 0 0 0-32h-6V504.500h-4v-3h2V449.500h-3v-3h3V394.500h-3v-3h3V340.500h-3v-3h3V284.500h-3v-3h3V229.500h-3v-3h3V173.500h-3v-3h3V60z" fill="#fddfc0" stroke="#222"/>
      </svg>
      <div class="d-flex flex-column align-items-center" style="width:13px;background:#ececec">
        <svg width="12" height="14"><path d="M3 8l3-3 3 3z" fill="#333"/></svg>
        <div class="my-auto thumb-h" style="width:12px;height:13px"></div>
        <svg width="12" height="14"><path d="M3 5l3 4 3-4z" fill="#333"/></svg>
      </div>
    </div>
    <div class="viewbar d-flex align-items-center flex-shrink-0">
      <button class="vb blue" aria-label="Дерево"><svg width="14" height="11" viewBox="0 0 16 13"><path d="M2 1v10M2 5h3M2 10h3" stroke="#114" stroke-dasharray="2 1"/><path d="M6 11V7l4-4 4 4v4z" fill="#c84" stroke="#210"/></svg></button>
      <button class="vb blue" aria-label="Обзор"><svg width="14" height="12"><path d="M1 2h9v7H1z" fill="#fff" stroke="#115"/><circle cx="8" cy="5" r="3" fill="#def" stroke="#115"/><path d="M10 8l3 3" stroke="#115" stroke-width="2"/></svg></button>
      <button class="vb" aria-label="Перо"><svg width="14" height="11"><path d="M1 9h5M2 4h10M5 8l6-6" stroke="#000" stroke-width="1.500"/></svg></button>
      <button class="vb" style="width:51px">1:100</button>
      <button class="vb" style="width:60px">594 %</button>
      <button class="vb" aria-label="Далее"><svg width="12" height="12"><use href="#tri"/></svg></button>
      <button class="vb" aria-label="Масштаб"><svg width="15" height="12" viewBox="0 0 16 13"><circle cx="5" cy="5" r="4" fill="#fff" stroke="#115" stroke-width="1.500"/><path d="M8 8l3 4" stroke="#115" stroke-width="2"/><path d="M10 4h6M13 1v6M10 9h6" stroke="#000" stroke-width="1.500"/></svg></button>
      <button class="vb" aria-label="Увеличить"><svg width="13" height="12"><use href="#zin"/></svg></button>
      <button class="vb" aria-label="Уменьшить"><svg width="13" height="12"><use href="#zout"/></svg></button>
      <button class="vb" aria-label="Рука"><svg width="13" height="12"><use href="#hand"/></svg></button>
      <button class="vb" aria-label="Показать все"><svg width="13" height="12"><use href="#zfit"/></svg></button>
      <button class="vb" aria-label="Поворот"><svg width="13" height="12"><use href="#rot"/></svg></button>
      <button class="vb" style="width:60px">0,00°</button>
      <button class="vb" style="margin-left:-3px" aria-label="Назад"><svg width="15" height="12"><use href="#zb"/></svg></button>
      <button class="vb" aria-label="Вперед" disabled><svg width="15" height="12"><use href="#zf"/></svg></button>
      <svg width="10" height="10"><path d="M7 1L3 5l4 4z" fill="#333"/></svg>
      <div class="mx-auto thumb-h" style="width:13px;height:12px"></div>
      <svg width="10" height="10" style="margin:0 16px 0 29px"><path d="M3 1l4 4-4 4z" fill="#333"/></svg>
    </div>
  </div>

  <aside class="nav-pane d-flex flex-column ms-1" style="margin-top:44px">
    <div class="cap d-flex align-items-center" style="height:13px"><span class="flex-grow-1">Навигатор - Карта п...</span><svg width="8" height="5" class="me-1"><path d="M0 0h8L4 5z"/></svg><span>×</span></div>
    <div class="navtools d-flex" style="gap:1px">
      <button class="nt border border-secondary rounded-1" aria-label="Выбор проекта"><svg class="i16"><path d="M1 1h8l3 3v10H1z" fill="#eef" stroke="#22a"/><path d="M3 7h6V5l4 3.500-4 3.500v-2H3z" fill="#8bf" stroke="#22a"/></svg><svg width="5" height="9"><path d="M1 1l4 4-4 4z"/></svg></button>
      <button class="nt pressed" style="margin-left:6px" aria-label="Карта проекта"><svg class="i16"><use href="#nhouse"/></svg></button>
      <button class="nt" aria-label="Карта видов"><svg class="i16"><path d="M2 3h5v4h7v6H2z" fill="#f5d96a" stroke="#000"/><path d="M7 9h7v2H7z" fill="#4ad"/></svg></button>
      <button class="nt" aria-label="Макеты"><svg class="i16"><path d="M2 3h12v10H2z" fill="#fff" stroke="#000"/><path d="M9 8h4v4H9z" fill="#8a8a50" stroke="#000"/></svg></button>
      <button class="nt" aria-label="Публикатор"><svg class="i16"><path d="M2 2h6v7H2zM5 5h6v6H5zM8 7h5v7H8z" fill="#fff" stroke="#22a"/></svg></button>
    </div>
    <div class="treebox d-flex flex-column overflow-hidden">
      <div class="d-flex treewrap">
        <div class="flex-grow-1 overflow-hidden" style="min-width:0">
          <div class="treelist d-flex flex-column">
            <div class="tr-row"><span class="g b n"></span><svg><use href="#nhouse"/></svg>Наименование прое</div>
            <div class="tr-row"><span class="g"></span><span class="g b"></span><svg><use href="#fold"/></svg>Этажи</div>
            <div class="tr-row"><span class="g"></span><span class="g"></span><span class="g t"></span><svg><use href="#floor"/></svg>4. Кровля</div>
            <div class="tr-row"><span class="g"></span><span class="g"></span><span class="g t"></span><svg><use href="#floor"/></svg>3. 3-й этаж</div>
            <div class="tr-row"><span class="g"></span><span class="g"></span><span class="g t"></span><svg><use href="#floor"/></svg>2. 2-й этаж</div>
            <div class="tr-row"><span class="g"></span><span class="g"></span><span class="g t"></span><svg><use href="#floor"/></svg>1. 1-й этаж</div>
            <div class="tr-row"><span class="g"></span><span class="g"></span><span class="g t e"></span><svg><use href="#floor"/></svg><span class="cur">-1. Подзем</span></div>
            <div class="tr-row"><span class="g"></span><span class="g b"></span><svg><use href="#foldh"/></svg>Разрезы</div>
            <div class="tr-row"><span class="g"></span><span class="g"></span><span class="g t"></span><svg><use href="#sech"/></svg>Р-1 Разрез 1</div>
            <div class="tr-row"><span class="g"></span><span class="g"></span><span class="g t e"></span><svg><use href="#sech"/></svg>Р-2 Разрез 2</div>
            <div class="tr-row"><span class="g"></span><span class="g b"></span><svg><use href="#foldh"/></svg>Фасады</div>
            <div class="tr-row"><span class="g"></span><span class="g"></span><span class="g t"></span><svg><use href="#fac"/></svg>Ф-1 Фасад 1</div>
            <div class="tr-row"><span class="g"></span><span class="g"></span><span class="g t"></span><svg><use href="#fac"/></svg>Ф-2 Фасад А</div>
            <div class="tr-row"><span class="g"></span><span class="g"></span><span class="g t"></span><svg><use href="#fac"/></svg>Ф-3 Фасад 2</div>
            <div class="tr-row"><span class="g"></span><span class="g"></span><span class="g t e"></span><svg><use href="#fac"/></svg>Ф-4 Фасад Б</div>
            <div class="tr-row"><span class="g"></span><span class="g t"></span><svg><use href="#foldi"/></svg>Внутренние вид</div>
            <div class="tr-row"><span class="g"></span><span class="g t"></span><svg><use href="#folds"/></svg>Рабочие листы</div>
            <div class="tr-row"><span class="g"></span><span class="g t"></span><svg><use href="#foldx"/></svg>Детали</div>
            <div class="tr-row"><span class="g"></span><span class="g t"></span><svg><use href="#foldd"/></svg>3D-документы</div>
            <div class="tr-row"><span class="g"></span><span class="g b"></span><svg><use href="#foldb"/></svg>3D</div>
            <div class="tr-row"><span class="g"></span><span class="g"></span><span class="g t"></span><svg><use href="#cam"/></svg>Общая перс</div>
            <div class="tr-row"><span class="g"></span><span class="g"></span><span class="g t e"></span><svg><use href="#axo"/></svg>Общая аксо</div>
            <div class="tr-row"><span class="g"></span><span class="g b"></span><svg><use href="#foldc"/></svg>Каталоги</div>
            <div class="tr-row"><span class="g"></span><span class="g"></span><span class="g b n"></span><svg><use href="#elem"/></svg>Элемент</div>
            <div class="tr-row"><span class="g"></span><span class="g"></span><span class="g"></span><span class="g t"></span><svg><use href="#cat"/></svg>Смета дв</div>
            <div class="tr-row"><span class="g"></span><span class="g"></span><span class="g"></span><span class="g t"></span><svg><use href="#cat"/></svg>Смета об</div>
            <div class="tr-row"><span class="g"></span><span class="g"></span><span class="g"></span><span class="g t"></span><svg><use href="#cat"/></svg>Смета ок</div>
            <div class="tr-row"><span class="g"></span><span class="g"></span><span class="g"></span><span class="g t"></span><svg><use href="#cat"/></svg>Смета ст</div>
          </div>
        </div>
        <div class="sb d-flex flex-column align-items-center">
          <svg width="12" height="14"><path d="M3 8l3-3 3 3z" fill="#333"/></svg>
          <div class="thumb d-flex align-items-center justify-content-center" style="width:12px;height:174px"><svg width="6" height="7"><path d="M0 1h6M0 3.500h6M0 6h6" stroke="#555"/></svg></div>
          <svg width="12" height="14" class="mt-auto"><path d="M3 5l3 4 3-4z" fill="#333"/></svg>
        </div>
      </div>
      <div class="d-flex align-items-center flex-grow-1" style="background:#ececec">
        <svg width="15" height="10"><path d="M9 2L5 5l4 3z" fill="#222"/></svg>
        <div class="thumb-h d-flex align-items-center justify-content-center" style="width:31px;height:12px"><svg width="8" height="6"><path d="M1 0v6M3.500 0v6M6 0v6" stroke="#333"/></svg></div>
        <svg width="12" height="10" style="margin-left:60px"><path d="M4 2l4 3-4 3z" fill="#222"/></svg>
      </div>
    </div>
    <div class="d-flex justify-content-end" style="gap:3px;padding:7px 1px 5px">
      <button class="pbtn" style="width:17px;height:18px" aria-label="Создать"><svg width="15" height="15"><path d="M1 4h11v9H1z" fill="#f08a48" stroke="#225"/><path d="M11 1v7M8 4h7M9 2l5 5M14 2l-5 5" stroke="#d8d820"/></svg></button>
      <button class="pbtn" style="width:17px;height:18px" aria-label="Удалить"><svg width="15" height="15"><path d="M2 2q4 5 11 10M12 2Q6 6 2 13" stroke="#e01818" stroke-width="2" fill="none"/></svg></button>
    </div>
    <div class="d-flex align-items-center" style="height:16px;background:#f5f5f5;padding-left:10px"><svg width="8" height="6" class="me-2"><path d="M0 0h8L4 5z"/></svg>Спецификации</div>
    <div class="d-flex align-items-center" style="margin-top:3px"><svg width="9" height="9" viewBox="0 0 14 13"><use href="#floor"/></svg>
      <input class="fld" style="width:27px;margin-left:2px;background:#e9e9e9;border-color:#bbb" value="-1." aria-label="Номер этажа"><input class="fld flex-grow-1" style="margin-left:2px;padding-left:2px;width:0" value="Подземный уровень" aria-label="Имя этажа"></div>
    <button class="pbtn" style="margin:4px 12px 9px;height:17px">Параметры...</button>
    <div class="cap d-flex align-items-center" style="height:13px"><span class="flex-grow-1">Планшет навигатора</span><svg width="8" height="5" class="me-1"><path d="M0 0h8L4 5z"/></svg><span>×</span></div>
    <div class="d-flex align-items-center justify-content-between" style="padding:4px 7px 0 4px">
      <div class="d-flex align-items-center border text-nowrap" style="width:85px;height:15px;padding-left:3px;gap:2px;background:#f6f6f6;border-color:#999!important"><svg width="14" height="12"><use href="#floor"/></svg>-1. Подземны...</div>
      <button class="pbtn" style="width:31px;height:15px">OK</button>
    </div>
    <div class="preview"><svg width="124" height="122"><path d="M42.500 22v81M10 69.500h110" stroke="#80b0f0"/><path d="M16 68h18v8H16z" fill="#fff" stroke="#c8101a" stroke-width="2"/><path d="M15 56v22h23" fill="none" stroke="#c8101a" stroke-width="2.500"/><path d="M15 52l-3 5 3 4 3-4zM40 78l-6-3v6z" fill="#e01818" stroke="#c8101a"/><path d="M21 70v5" stroke="#000" stroke-width="2"/><path d="M24 70l2 3" stroke="#2a5"/></svg></div>
    <div class="d-flex align-items-center" style="padding:4px 11px 0 4px;gap:3px">
      <button class="pbtn" style="width:14px;height:15px" aria-label="Меньше"><svg width="12" height="12"><use href="#zout"/></svg></button>
      <button class="pbtn" style="width:23px;height:15px" aria-label="Вписать"><svg width="12" height="12"><use href="#zfit"/></svg></button>
      <button class="pbtn" style="width:14px;height:15px" aria-label="Больше"><svg width="12" height="12"><use href="#zin"/></svg></button>
      <span class="flex-grow-1" style="padding-left:6px">594 %</span>
      <button class="pbtn" style="width:13px;height:15px" aria-label="Далее"><svg width="12" height="12"><use href="#tri"/></svg></button>
    </div>
  </aside>
</main>

<section class="coord d-flex align-items-center flex-shrink-0">
  <span class="grip"></span>
  <button class="pbtn cb" style="margin:0 4px 0 9px" aria-label="Начало"><svg width="11" height="11"><path d="M2 2l7 7M9 2L2 9" stroke="#000" stroke-width="1.500"/><path d="M4 4h3v3H4z"/></svg></button>
  <button class="pbtn cb" aria-label="Плоскость"><svg width="19" height="18"><path d="M2 5l3-2M8 4l4-2M13 7l4-3M2 12l4-3M10 15l6-3" stroke="#888"/><path d="M2 13L17 6M8 6v10" stroke="#000" stroke-width="1.500"/></svg></button>
  <svg width="24" height="22" class="ms-1"><path d="M2 3h18M2 8h18M2 13h18M5 1v16M10 1v16M15 1v16" stroke="#888" stroke-dasharray="1 1"/><path d="M5 4v11h12" fill="none" stroke="#000" stroke-width="1.500"/><path d="M5 1l2 4H3zM20 14l3 3-3 3z"/></svg>
  <svg width="28" height="22" style="margin:0 2px"><path d="M8 11h9M12.500 7v9" stroke="#000" stroke-width="1.400"/><path d="M23 14l3 3-3 3z"/></svg>
  <span class="vs tall" style="margin:0 4px 0 0"></span>
  <button class="blue" style="width:11px;height:20px" aria-label="Относительно XY">Δ</button>
  <div style="margin-left:6px"><div class="d-flex"><label class="lb" for="fx">Δx:</label><input id="fx" class="cf" value="5127,1"></div><div class="d-flex" style="margin-top:1px"><label class="lb" for="fy">Δy:</label><input id="fy" class="cf" value="17143,0"></div></div>
  <span class="vs tall" style="margin:0 5px"></span>
  <button class="blue" style="width:11px;height:20px" aria-label="Относительно R">Δ</button>
  <div style="margin-left:6px"><div class="d-flex"><label class="lb" for="fr">Δr:</label><input id="fr" class="cf" value="17893,3"></div><div class="d-flex" style="margin-top:1px"><label class="lb text-center" for="fa">a:</label><input id="fa" class="cf" value="73,35°"></div></div>
  <span class="vs tall" style="margin:0 4px"></span>
  <svg width="30" height="22"><path d="M5 4l14 14M19 4L5 18M6 10h14" stroke="#888" stroke-width="2"/><path d="M24 14l3 3-3 3z" fill="#777"/></svg>
  <div><div class="d-flex"><label class="lb" for="fz">Δz:</label><input id="fz" class="cf" value="-3000,0"></div><span class="sm fw-bold d-block text-nowrap" style="width:94px">отн. Проектный нуль</span></div>
  <button class="pbtn align-self-end mb-1" style="width:10px;height:11px;margin-left:22px" aria-label="Уровень"><svg width="9" height="9"><use href="#tri"/></svg></button>
  <span class="grip" style="margin:0 5px 0 10px"></span>
  <button class="pbtn" style="width:24px;height:20px" aria-label="Направляющие"><svg width="22" height="18"><path d="M3 5l7 9 7-9M5 7l4-2h8M2 3h3M2 15h5M17 2v5" fill="none" stroke="#222" stroke-width="1.300"/><path d="M16 9v7l2-2 3 0z"/></svg></button>
  <button class="pbtn" style="width:11px;height:20px;margin:0 4px 0 1px" aria-label="Еще"><svg width="9" height="10"><use href="#tri"/></svg></button>
  <button class="pbtn opacity-50" style="width:20px;height:20px" aria-label="Отрезок"><svg width="18" height="18"><path d="M2 15L15 3M2 12v4M13 2h4v4" stroke="#555" fill="none"/></svg></button>
  <span class="vs tall" style="margin:0 7px 0 4px"></span>
  <svg width="24" height="22"><path d="M3 9l3 5 7-9" fill="none" stroke="#000" stroke-width="1.500"/><path d="M19 14l3 4-3 3z"/></svg>
  <svg width="22" height="22" class="ms-1"><path d="M6 2v6M3 5h6M9 8l4 3-7 7" fill="none" stroke="#999"/><path d="M17 14l3 4-3 3z" fill="#888"/></svg>
  <svg width="24" height="22" style="margin:0 5px"><path d="M7 3h10v8H7zM3 7h10v9H3z" fill="none" stroke="#222" stroke-width="1.500"/><path d="M1 5h4v4H1zM11 5h4v4h-4zM1 14h4v4H1zM11 14h4v4h-4zM15 1h3v3h-3z" fill="#444"/><path d="M20 14l3 4-3 3z"/></svg>
  <button class="pbtn cb" aria-label="Волшебная палочка"><svg width="19" height="18"><circle cx="9" cy="8" r="6" fill="none" stroke="#777" stroke-dasharray="1 2" stroke-width="3"/><path d="M9 8l7 7" stroke="#000" stroke-width="2"/></svg></button>
  <span class="vs tall" style="margin:0 6px 0 4px"></span>
  <svg width="22" height="22"><path d="M2 5l14 9M7 11l5-5" stroke="#000" fill="none"/><path d="M16 11l3 4-3 3z"/><circle cx="9" cy="9" r="1.500"/></svg>
  <div class="sm fw-bold" style="width:53px;line-height:11px">Середина<br><span class="fw-normal text-secondary">2</span></div>
  <button class="pbtn align-self-start mt-1" style="width:11px;height:11px" aria-label="Точки привязки"><svg width="9" height="9"><use href="#tri"/></svg></button>
  <span class="vs tall" style="margin:0 5px 0 4px"></span>
  <button class="pbtn sm text-secondary" style="width:53px;height:17px" disabled>ОК</button>
  <button class="pbtn sm text-secondary" style="width:53px;height:17px;margin-left:10px" disabled>Отменить</button>
</section>

<footer class="statusb d-flex align-items-center flex-shrink-0">
  <span class="flex-grow-1" style="padding-left:2px">Открывается менеджер профилей...</span>
  <svg width="14" height="9"><path d="M1 4l3-3h8l1 3v4H1z" fill="#aaa" stroke="#333"/><path d="M2 5h10" stroke="#eee"/></svg>
  <span class="text-nowrap" style="width:69px;padding-left:5px">C: 104.4 ГБ</span>
  <svg width="11" height="11"><path d="M2 1h7l1 1v7l-1 1H2L1 9V2z" fill="#bbb" stroke="#222"/></svg>
  <span style="width:86px;padding-left:8px">3.34 ГБ</span>
</footer>

<div class="taskbar d-flex align-items-center flex-shrink-0">
  <button class="tk" style="width:44px;margin-right:6px" aria-label="Пуск"><svg width="32" height="32"><circle cx="16" cy="16" r="15" fill="#3a6ea5"/><ellipse cx="16" cy="9" rx="12" ry="8" fill="#9cc4e4" opacity=".7"/><path d="M8 11q4-3 8-1l-1 6q-4-2-8 0z" fill="#e8642c"/><path d="M17 10q4 2 8-1l-2 7q-4 2-7 0z" fill="#8cc63e"/><path d="M7 17q4-2 8 0l-2 6q-4-2-7 0z" fill="#3fa9f5"/><path d="M16 17q4 2 7 0l-2 6q-4 2-7 0z" fill="#fbd23c"/></svg></button>
  <button class="tk run" aria-label="Проводник"><svg class="i28"><path d="M2 5h8l2 2h12v18H2z" fill="#f1d97c" stroke="#c9a94a"/><path d="M5 3h6v4H5zM15 4h7v4h-7z" fill="#fff" stroke="#c9a94a"/><path d="M2 10h23v13H2z" fill="#f9ecae"/><path d="M6 27v-9h16v9h-4v-5h-8v5z" fill="#8fd0ee" stroke="#4a9cc8"/><path d="M6 4h2v2H6z" fill="#2a4"/><path d="M16 5h2v1h-2z" fill="#c33"/></svg></button>
  <button class="tk" aria-label="Проигрыватель"><svg class="i28"><path d="M4 4l18-1v22l-18-1z" fill="#8fc2e6" stroke="#5c9acb"/><path d="M22 5l4 3v15l-4 2z" fill="#c6def0"/><circle cx="12" cy="14" r="7.500" fill="#f07a22"/><path d="M10 9l7 5-7 5z" fill="#fff"/></svg></button>
  <button class="tk" aria-label="Калькулятор"><svg class="i28"><path d="M5 2h18v24H5z" fill="#a9cdea" stroke="#6a9cc8"/><path d="M7 4h14v7H7z" fill="#e9f3fb"/><path d="M7 14h10M7 17h10M7 20h10M7 23h10" stroke="#fff" stroke-width="2" stroke-dasharray="2 1"/><path d="M19 13h2v11h-2z" fill="#f0a040"/></svg></button>
  <button class="tk run" style="margin-left:2px" aria-label="Opera"><svg class="i28"><path fill-rule="evenodd" d="M14 1a12 13 0 1 0 .1 0zM14 4c4 0 5 5 5 10s-1 10-5 10-5-5-5-10 1-10 5-10z" fill="#d01818"/></svg></button>
  <button class="tk run" aria-label="Photoshop"><svg class="i28"><path d="M2 1h24v24H2z" fill="#1f8fdc"/><text x="14" y="18" text-anchor="middle" font-size="13" font-weight="bold" fill="#06233c">Ps</text></svg></button>
  <button class="tk run" aria-label="Chrome"><svg class="i28"><path d="M14 14L3.600 8A12 12 0 0 1 24.400 8z" fill="#dc3a2c"/><path d="M14 14L24.400 8A12 12 0 0 1 14 26z" fill="#f9cf2e"/><path d="M14 14v12A12 12 0 0 1 3.600 8z" fill="#36a150"/><circle cx="14" cy="14" r="6" fill="#fff"/><circle cx="14" cy="14" r="4.500" fill="#3d7fe0"/></svg></button>
  <button class="tk run act" aria-label="ArchiCAD"><svg class="i28"><use href="#arc"/></svg></button>
  <button class="tk run" aria-label="Internet Explorer"><svg class="i28"><path d="M22 18a9 9 0 1 1 1-5H9" fill="none" stroke="#1e78c8" stroke-width="4"/><path d="M3 25Q0 20 12 10T26 4q-1 3-4 5" fill="none" stroke="#f2bb2a" stroke-width="2"/></svg></button>
  <button class="tk run" style="margin-left:2px" aria-label="Paint"><svg class="i28"><path d="M2 17q0-9 11-10t12 6-6 6-3 6-14-1z" fill="#d5e4f0" stroke="#88a6c0"/><circle cx="8" cy="13" r="2.200" fill="#3b9"/><circle cx="14" cy="11" r="2.200" fill="#48c"/><circle cx="8" cy="19" r="2.200" fill="#d33"/><path d="M14 26l10-20" stroke="#d89040" stroke-width="2.500"/><path d="M22 8l2-7 2 1-1 7z" fill="#a04a20"/></svg></button>
  <div class="ms-auto d-flex align-items-center" style="gap:7px">
    <span class="me-1">RU</span>
    <svg width="10" height="6"><path d="M1 5l4-4 4 4z" fill="#fff"/></svg>
    <svg width="14" height="14"><path d="M2 1v13" stroke="#fff" stroke-width="1.500"/><path d="M3 2h5v1h5l-2 2 1 3H7V7H3z" fill="#fff" stroke="#445"/></svg>
    <svg width="14" height="14"><path d="M4 3h9v7H4zM6 12h6M2 1v4h3M2 5v8h3" fill="none" stroke="#fff" stroke-width="1.500"/></svg>
    <svg width="14" height="14"><path d="M1 5h3l4-4v12L4 9H1z" fill="#fff"/><path d="M9 4q2 3 0 6M11 2q3 5 0 10" fill="none" stroke="#fff"/></svg>
    <div class="text-center" style="width:58px;line-height:14px">10:41<br>25.01.2012</div>
    <button style="width:12px;height:32px;margin-left:-3px;border:1px solid #4f6077;background:linear-gradient(#9fb0c5,#5d708a)" aria-label="Показать рабочий стол"></button>
  </div>
</div>

<script src="https://cdn.jsdelivr.net/npm/bootstrap@5.3.0/dist/js/bootstrap.bundle.min.js"></script>
</body>
</html>
